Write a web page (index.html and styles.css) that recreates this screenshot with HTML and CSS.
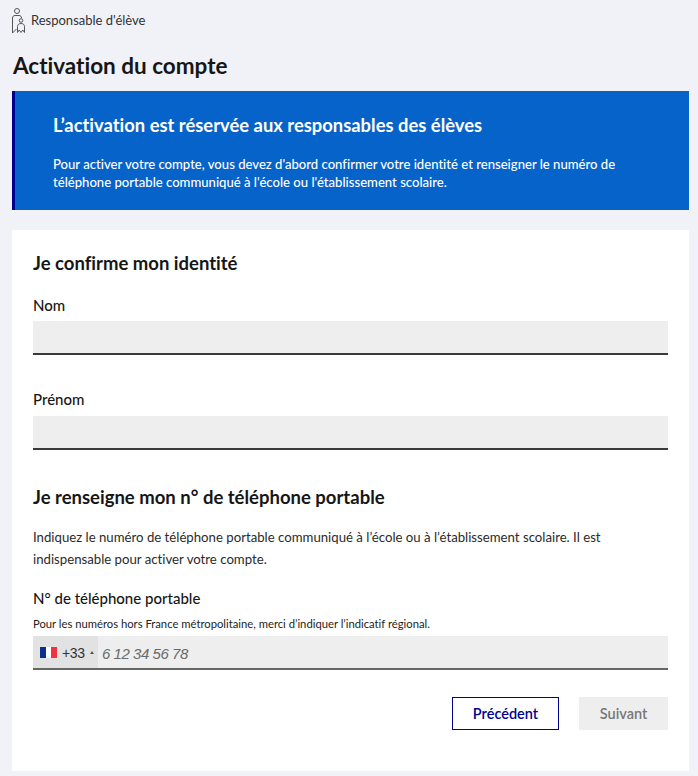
FILE: index.html
```html
<!DOCTYPE html>
<html lang="fr">
<head>
<meta charset="utf-8">
<title>Activation du compte</title>
<link rel="stylesheet" href="styles.css">
</head>
<body>
<div class="page">
  <div class="role">
    <svg class="role-icon" width="14" height="28" viewBox="0 0 14 28" fill="none" stroke="#555" stroke-width="1">
      <circle cx="5" cy="4" r="2.5"/>
      <path d="M.5 26V11c0-1.500 1-2.500 2.500-2.500h4c1.500 0 2.500 1 2.500 2.500"/>
      <path d="M.5 26l4-4"/>
      <circle cx="9" cy="13.500" r="1.800"/>
      <path d="M5.500 25.500v-6c0-2 1.500-3 3.500-3s3.500 1 3.500 3v6l-1.700-2.500-1.800 2.500-1.800-2.500z"/>
    </svg>
    <span class="role-name">Responsable d'élève</span>
  </div>
  <h1 class="title">Activation du compte</h1>
  <section class="banner">
    <h2 class="banner-title">L’activation est réservée aux responsables des élèves</h2>
    <p class="banner-text">Pour activer votre compte, vous devez d'abord confirmer votre identité et renseigner le numéro de<br>téléphone portable communiqué à l'école ou l'établissement scolaire.</p>
  </section>
  <form class="card">
    <h3 class="section-title">Je confirme mon identité</h3>
    <label class="label label-first">Nom</label>
    <div class="input"></div>
    <label class="label label-second">Prénom</label>
    <div class="input input-second"></div>
    <h3 class="section-title section-phone">Je renseigne mon n° de téléphone portable</h3>
    <p class="intro">Indiquez le numéro de téléphone portable communiqué à l’école ou à l’établissement scolaire. Il est indispensable pour activer votre compte.</p>
    <label class="label label-phone">N° de téléphone portable</label>
    <p class="hint">Pour les numéros hors France métropolitaine, merci d’indiquer l’indicatif régional.</p>
    <div class="input phone">
      <div class="country">
        <svg class="flag" width="17" height="11" viewBox="0 0 17 11"><rect width="6" height="11" fill="#0b2f8f"/><rect x="6" width="5" height="11" fill="#fff"/><rect x="11" width="6" height="11" fill="#ef3340"/></svg>
        <span class="dial">+33</span>
        <span class="caret"></span>
      </div>
      <span class="placeholder">6 12 34 56 78</span>
    </div>
    <div class="actions">
      <button type="button" class="btn btn-secondary">Précédent</button>
      <button type="button" class="btn btn-disabled">Suivant</button>
    </div>
  </form>
</div>
</body>
</html>
```
FILE: styles.css
```css
* { box-sizing: border-box; }
html, body { margin: 0; height: 100%; }
body {
  background: #f1f2f8;
  font-family: "Lato", "Noto Sans", sans-serif;
  font-variant-ligatures: none;
  color: #161616;
  overflow: hidden;
}
.page { padding: 7px 9px 5px 12px; }
.role { display: flex; align-items: center; gap: 5px; height: 28px; }
.role-name { font-size: 13px; color: #333; margin-top: -3px; }
.title { margin: 17px 0 0 1px; font-size: 22.500px; line-height: 28px; font-weight: 700; color: #161616; }
.banner {
  margin-top: 11px;
  height: 119px;
  background: #0563c9;
  border-left: 3px solid #000091;
  padding: 23px 38px 0;
  color: #fff;
}
.banner-title { margin: 0; font-size: 18.400px; line-height: 22px; font-weight: 700; }
.banner-text { margin: 20px 0 0; font-size: 13.100px; line-height: 17.500px; font-weight: 500; }
.card {
  margin-top: 20px;
  height: 541px;
  background: #fff;
  padding: 21px 21px 0;
}
.section-title { margin: 0; font-size: 18.500px; line-height: 24px; font-weight: 700; }
.label { display: block; font-size: 15px; line-height: 20px; font-weight: 500; }
.label-first { margin-top: 20px; }
.label-second { margin-top: 34px; }
.input {
  margin-top: 6px;
  height: 34px;
  background: #eeeeee;
  border-bottom: 2px solid #3a3a3a;
}
.input-second { margin-top: 7px; }
.section-phone { margin-top: 35px; }
.intro { margin: 17px 0 0; font-size: 13.200px; line-height: 22px; color: #2a2a2a; }
.label-phone { margin-top: 18px; }
.hint { margin: 9px 0 0; font-size: 11.250px; line-height: 14px; color: #222; }
.phone { margin-top: 5px; display: flex; align-items: center; border-bottom-color: #666; }
.country {
  width: 65px;
  height: 100%;
  background: #e2e2e2;
  display: flex;
  align-items: center;
  padding-left: 7px;
}
.flag { flex: none; }
.dial { margin: 1px 0 0 5px; font-family: "Liberation Sans", sans-serif; font-size: 14px; letter-spacing: -0.4px; color: #333; }
.caret {
  margin-left: 5px;
  width: 0; height: 0;
  border-left: 2.500px solid transparent;
  border-right: 2.500px solid transparent;
  border-bottom: 3px solid #555;
}
.placeholder { margin: 2px 0 0 4px; font-family: "Liberation Sans", sans-serif; font-size: 15px; letter-spacing: -0.450px; font-style: italic; color: #6a6a6a; }
.actions { margin-top: 27px; display: flex; justify-content: flex-end; gap: 20px; }
.btn { height: 33px; font-family: inherit; font-size: 14.500px; font-weight: 600; padding: 0; }
.btn-secondary { width: 107px; background: #fff; color: #000091; border: 1px solid #000091; }
.btn-disabled { width: 89px; background: #eeeeee; color: #777; border: 0; }
```
